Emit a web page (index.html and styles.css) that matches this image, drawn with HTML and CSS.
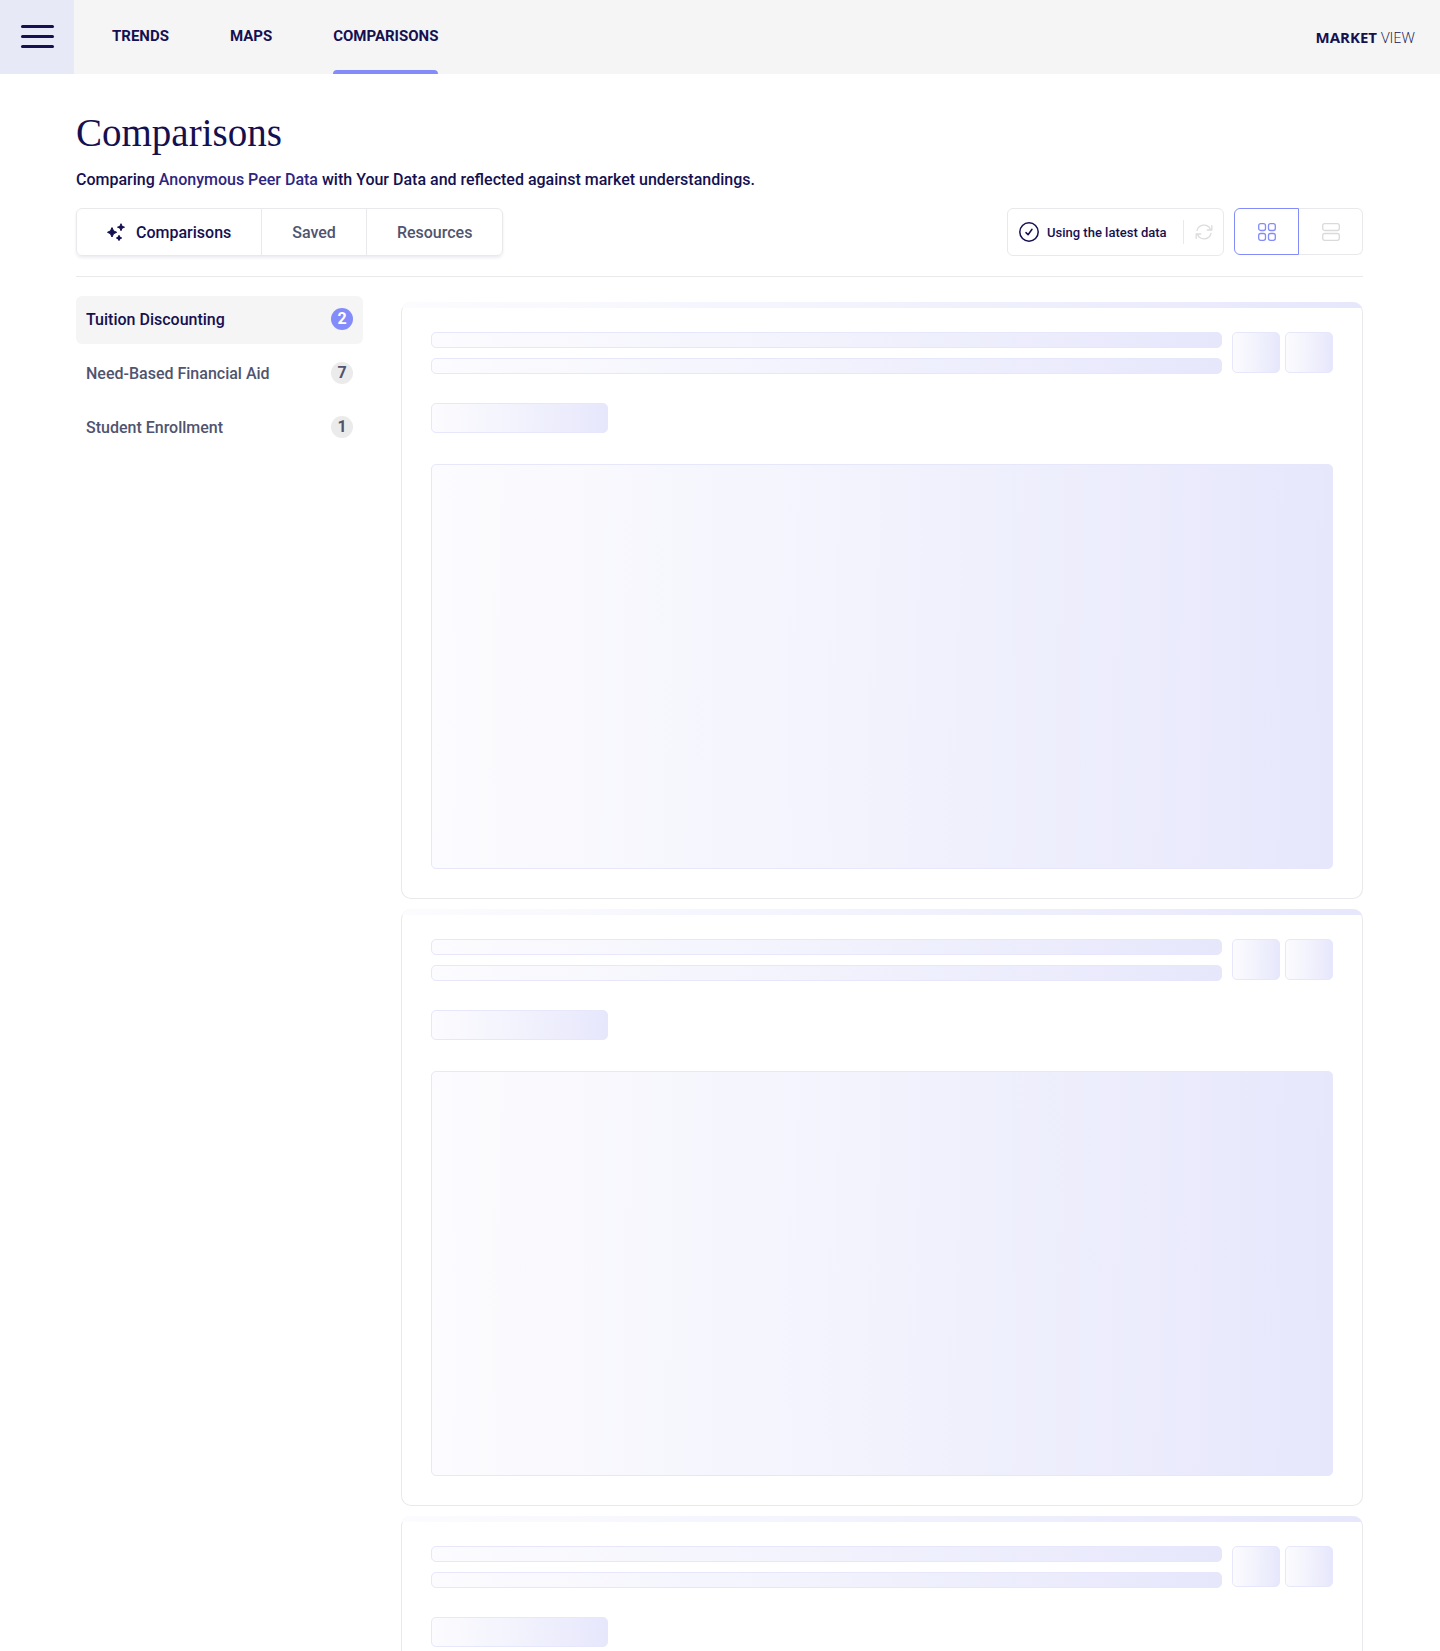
FILE: index.html
```html
<!DOCTYPE html>
<html lang="en">
<head>
    <meta charset="UTF-8">
    <meta name="viewport" content="width=device-width, initial-scale=1.0">
    <title>Comparisons</title>
    <link rel="stylesheet" href="styles.css">
</head>
<body>
    <header class="topbar">
        <button class="menu" type="button" aria-label="Menu">
            <span></span>
            <span></span>
            <span></span>
        </button>
        <nav class="nav">
            <a href="#">TRENDS</a>
            <a href="#">MAPS</a>
            <a href="#" class="current">COMPARISONS</a>
        </nav>
        <div class="brand"><b>MARKET</b> VIEW</div>
    </header>

    <main class="page">
        <h1>Comparisons</h1>
        <p class="subtitle">Comparing <a href="#">Anonymous Peer Data</a> with Your Data and reflected against market understandings.</p>

        <div class="toolbar">
            <div class="tabs">
                <button type="button" class="active">
                    <svg width="18" height="18" viewBox="0 0 18 18" fill="currentColor" stroke="currentColor" stroke-linejoin="round">
                        <path d="M5 4.6 L6.6 7.9 L9.7 9.3 L6.6 10.7 L5 14 L3.4 10.7 L.5 9.3 L3.4 7.9 Z"/>
                        <path d="M14 .7 L15 3.2 L17.5 4.2 L15 5.2 L14 7.7 L13 5.2 L10.5 4.2 L13 3.2 Z"/>
                        <path d="M12 12.3 L12.9 14.1 L14.7 15 L12.9 15.9 L12 17.6 L11.1 15.9 L9.4 15 L11.1 14.1 Z"/>
                    </svg>
                    Comparisons
                </button>
                <button type="button">Saved</button>
                <button type="button">Resources</button>
            </div>

            <div class="tools">
                <div class="status">
                    <svg width="20" height="20" viewBox="0 0 20 20" fill="none" stroke="currentColor" stroke-width="1.5" stroke-linecap="round" stroke-linejoin="round">
                        <circle cx="10" cy="10" r="9.2"/>
                        <path d="M7 10.6 L9.1 12.7 L13 7.3"/>
                    </svg>
                    <span class="status-text">Using the latest data</span>
                    <button type="button" class="refresh" aria-label="Refresh">
                        <svg width="18" height="18" viewBox="0 0 18 18" fill="none" stroke="currentColor" stroke-width="1.3" stroke-linecap="round" stroke-linejoin="round">
                            <path d="M2 7.5 A7.2 7.2 0 0 1 15.4 6.2 L16.7 7 M16.8 2.6 V7 H12.3"/>
                            <path d="M16 10.5 A7.2 7.2 0 0 1 2.6 11.8 L1.3 11 M1.2 15.4 V11 H5.7"/>
                        </svg>
                    </button>
                </div>
                <div class="views">
                    <button type="button" class="active" aria-label="Grid view">
                        <svg width="18" height="18" viewBox="0 0 18 18" fill="none" stroke="currentColor" stroke-width="1.3">
                            <rect x=".7" y=".7" width="6.8" height="6.8" rx="2"/>
                            <rect x="10.5" y=".7" width="6.8" height="6.8" rx="2"/>
                            <rect x=".7" y="10.5" width="6.8" height="6.8" rx="2"/>
                            <rect x="10.5" y="10.5" width="6.8" height="6.8" rx="2"/>
                        </svg>
                    </button>
                    <button type="button" aria-label="List view">
                        <svg width="18" height="18" viewBox="0 0 18 18" fill="none" stroke="currentColor" stroke-width="1.3">
                            <rect x=".7" y=".7" width="16.6" height="6.8" rx="2"/>
                            <rect x=".7" y="10.5" width="16.6" height="6.8" rx="2"/>
                        </svg>
                    </button>
                </div>
            </div>
        </div>

        <div class="content">
            <nav class="topics">
                <a href="#" class="active">Tuition Discounting <span class="count">2</span></a>
                <a href="#">Need-Based Financial Aid <span class="count">7</span></a>
                <a href="#">Student Enrollment <span class="count">1</span></a>
            </nav>

            <div class="cards">
                <div class="card">
                    <div class="card-head">
                        <div class="lines">
                            <div class="bone"></div>
                            <div class="bone"></div>
                        </div>
                        <div class="bone square"></div>
                        <div class="bone square"></div>
                    </div>
                    <div class="bone chip"></div>
                    <div class="bone chart"></div>
                </div>
                <div class="card">
                    <div class="card-head">
                        <div class="lines">
                            <div class="bone"></div>
                            <div class="bone"></div>
                        </div>
                        <div class="bone square"></div>
                        <div class="bone square"></div>
                    </div>
                    <div class="bone chip"></div>
                    <div class="bone chart"></div>
                </div>
                <div class="card">
                    <div class="card-head">
                        <div class="lines">
                            <div class="bone"></div>
                            <div class="bone"></div>
                        </div>
                        <div class="bone square"></div>
                        <div class="bone square"></div>
                    </div>
                    <div class="bone chip"></div>
                    <div class="bone chart"></div>
                </div>
            </div>
        </div>
    </main>
</body>
</html>
```

FILE: styles.css
```css
* {
    box-sizing: border-box;
}
body {
    height: 100vh;
    margin: 0;
    overflow: hidden;
    font-family: Roboto, sans-serif;
    font-size: 16px;
    font-weight: 500;
    color: #151050;
    background: #fff;
}
a {
    color: inherit;
    text-decoration: none;
}
button {
    padding: 0;
    border: none;
    background: none;
    font: inherit;
    color: inherit;
    cursor: pointer;
}
svg {
    display: block;
    flex-shrink: 0;
}

/* top bar */
.topbar {
    display: flex;
    height: 74px;
    padding-right: 25px;
    background: #f5f5f5;
}
.menu {
    display: flex;
    flex-direction: column;
    align-items: center;
    justify-content: center;
    gap: 7px;
    width: 74px;
    padding-bottom: 2px;
    background: #e8e9f7;
}
.menu span {
    width: 33px;
    height: 3px;
    border-radius: 2px;
    background: #151050;
}
.nav {
    display: flex;
    gap: 61px;
    margin-left: 38px;
    font-size: 15px;
    font-weight: 700;
    line-height: 72px;
}
.nav .current {
    position: relative;
}
.nav .current::after {
    content: "";
    position: absolute;
    left: 0;
    right: 0;
    bottom: 0;
    height: 4px;
    border-radius: 4px 4px 0 0;
    background: #848cf9;
}
.brand {
    margin-left: auto;
    font-family: "Open Sans", sans-serif;
    font-size: 15px;
    font-weight: 300;
    line-height: 74px;
}
.brand b {
    font-weight: 700;
}

/* page heading */
.page {
    padding: 35px 77px 0 76px;
}
h1 {
    margin: 0;
    font-family: "Liberation Serif", serif;
    font-size: 39px;
    font-weight: 400;
    line-height: 48px;
}
.subtitle {
    margin: 11px 0 16px;
    line-height: 24px;
}
.subtitle a {
    color: #2d2580;
}

/* tabs and tools */
.toolbar {
    display: flex;
    justify-content: space-between;
    padding-bottom: 20px;
    border-bottom: 1px solid #e9e9eb;
}
.tabs {
    display: flex;
    height: 48px;
    border: 1px solid #e9e9eb;
    border-radius: 6px;
    box-shadow: 0 2px 3px rgba(20, 16, 80, 0.08);
}
.tabs button {
    display: flex;
    align-items: center;
    gap: 11px;
    padding: 0 30px;
    color: #50546f;
}
.tabs button + button {
    border-left: 1px solid #e9e9eb;
}
.tabs .active {
    color: #151050;
}
.tools {
    display: flex;
    align-items: flex-start;
    gap: 10px;
}
.status {
    display: flex;
    align-items: center;
    min-width: 217px;
    height: 48px;
    padding: 0 10px 0 11px;
    border: 1px solid #e9e9eb;
    border-radius: 6px;
    font-size: 13px;
}
.status-text {
    flex: 1;
    margin: 0 11px 0 8px;
}
.refresh {
    display: flex;
    align-items: center;
    height: 24px;
    padding-left: 11px;
    border-left: 1px solid #e9e9eb;
    color: #dcdcdc;
}
.views {
    display: flex;
}
.views button {
    display: flex;
    align-items: center;
    justify-content: center;
    width: 64px;
    height: 47px;
    border: 1px solid #e9e9eb;
    border-left: none;
    border-radius: 0 6px 6px 0;
    color: #dadada;
}
.views .active {
    width: 65px;
    border: 1px solid #848cf9;
    border-radius: 6px 0 0 6px;
    color: #848cf9;
}

/* topics and cards */
.content {
    display: flex;
    gap: 38px;
    padding-top: 19px;
}
.topics {
    display: flex;
    flex-direction: column;
    flex: 0 0 287px;
    gap: 6px;
}
.topics a {
    display: flex;
    align-items: center;
    justify-content: space-between;
    height: 48px;
    padding: 0 10px 2px;
    border-radius: 6px;
    color: #50546f;
}
.topics .active {
    color: #151050;
    background: #f5f5f5;
}
.count {
    width: 22px;
    border-radius: 11px;
    font-weight: 700;
    line-height: 22px;
    text-align: center;
    background: #ebebeb;
}
.active .count {
    color: #fff;
    background: #848cf9;
}
.cards {
    display: flex;
    flex-direction: column;
    flex: 1;
    gap: 10px;
    padding-top: 6px;
}
.card {
    position: relative;
    padding: 30px 29px 29px;
    border: 1px solid #e9e9eb;
    border-top: none;
    border-radius: 10px;
}
/* strip along the top edge of the card */
.card::before {
    content: "";
    position: absolute;
    inset: 0 -1px;
    border-radius: 10px;
    background: linear-gradient(90deg, #fcfbfe, #f5f6fd 33%, #e7e7fc) top / 100% 6px no-repeat;
}
.card-head {
    display: flex;
    gap: 5px;
}
.lines {
    display: flex;
    flex-direction: column;
    flex: 1;
    gap: 10px;
    margin-right: 5px;
}
.bone {
    height: 16px;
    border: 1px solid #e7e7fc;
    border-radius: 5px;
    background: linear-gradient(91deg, #fcfbfe, #f5f6fd 33%, #e7e7fc);
}
.square {
    width: 48px;
    height: 41px;
}
.chip {
    width: 177px;
    height: 30px;
    margin: 29px 0 31px;
}
.chart {
    height: 405px;
}
```
